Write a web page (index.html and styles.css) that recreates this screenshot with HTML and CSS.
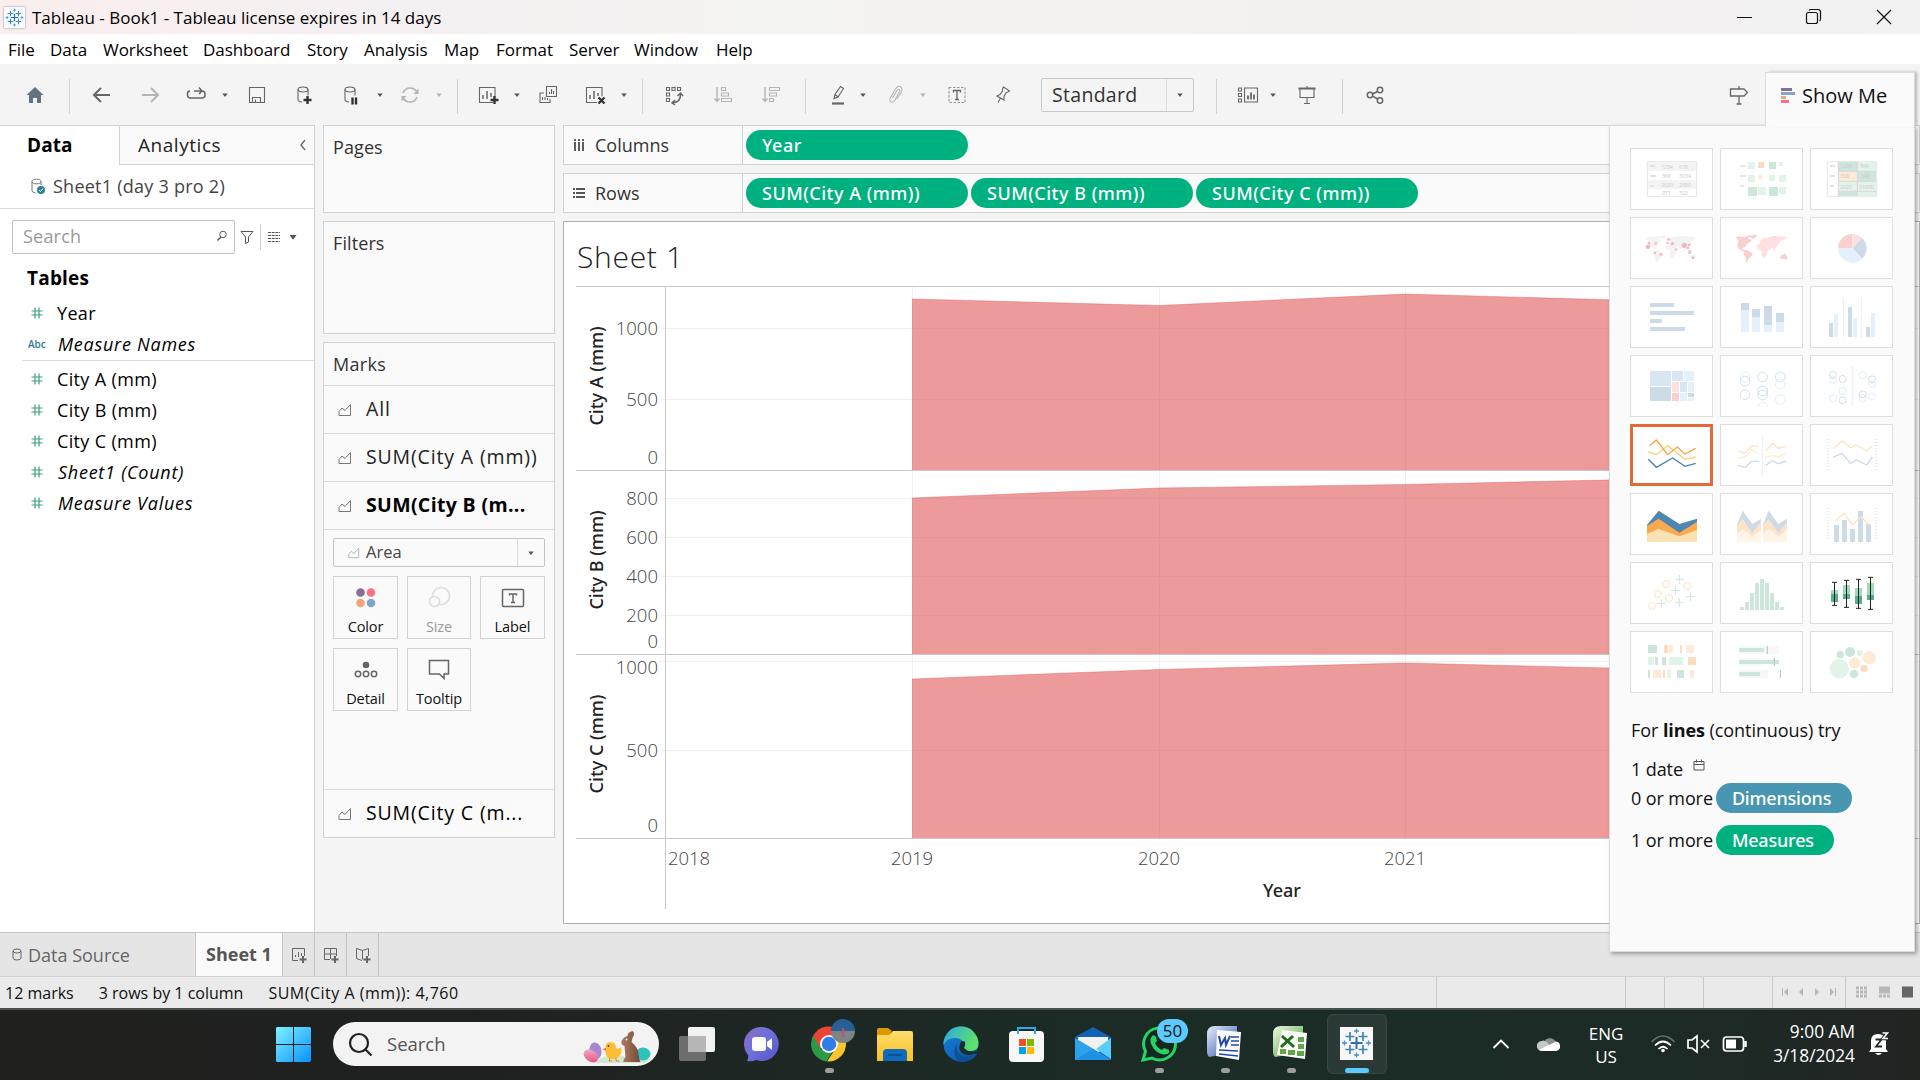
FILE: index.html
```html
<!DOCTYPE html>
<html lang="en">
<head>
<meta charset="utf-8">
<title>Tableau - Book1</title>
<link rel="stylesheet" href="styles.css">
</head>
<body>
<svg width="0" height="0" class="defs">
  <defs>
    <symbol id="hash" viewBox="0 0 12 12"><path d="M4 .5v11M8 .5v11M.5 4h11M.5 8h11" stroke="#3f9f7f" stroke-width="1.2" fill="none"/></symbol>
    <symbol id="area" viewBox="0 0 14 14"><path d="M1 12.5V8.500l3-3.500 3 2.500 5.500-6v11z" stroke="currentColor" fill="none"/></symbol>
    <symbol id="caret" viewBox="0 0 12 12"><path d="M3.300 4.500h5.400L6 8z" fill="currentColor"/></symbol>
    <symbol id="tableau" viewBox="0 0 34 34"><g stroke-width="1.700"><path d="M17 11v12M11 17h12" stroke="#2f6ea5" stroke-width="2"/><path d="M10.500 6v9M6 10.500h9M23.500 6v9M19 10.500h9M10.500 19v9M6 23.500h9M23.500 19v9M19 23.500h9" stroke="#3c87b8"/><path d="M17 2.500v5M14.500 5h5M17 26.500v5M14.500 29h5M5 14.500v5M2.500 17h5M29 14.500v5M26.500 17h5" stroke="#4a90c0" stroke-width="1.300"/></g></symbol>
  </defs>
</svg>

<header class="titlebar">
  <svg class="app-icon" viewBox="0 0 34 34"><use href="#tableau"/></svg>
  <span class="title">Tableau - Book1 - Tableau license expires in 14 days</span>
  <svg class="window-controls" viewBox="0 0 160 34" fill="none" stroke="#111" stroke-width="1.200">
    <path d="M1 17.500h15M141 10l14 14M155 10l-14 14"/><rect x="70.500" y="12.500" width="11" height="11" rx="2"/><path d="M73 10.500q.5-1 2-1h7q2.500 0 2.500 2.500v7q0 1.500-1 2"/>
  </svg>
</header>

<nav class="menu">
  <span>File</span><span>Data</span><span>Worksheet</span><span>Dashboard</span><span>Story</span><span>Analysis</span><span>Map</span><span>Format</span><span>Server</span><span>Window</span><span>Help</span>
</nav>

<div class="toolbar">
  <svg class="ic" viewBox="0 0 24 24"><path d="M12 4l8.500 8h-2.500v8h-4v-5h-4v5H6v-8H3.500z" fill="#66717f"/></svg>
  <i class="sep m22"></i>
  <svg class="ic m20" viewBox="0 0 24 24"><path d="M20 12H5M11 5l-7 7 7 7" stroke-width="2"/></svg>
  <svg class="ic m24 off" viewBox="0 0 24 24"><path d="M4 12h15M13 5l7 7-7 7" stroke-width="2"/></svg>
  <svg class="ic m22" viewBox="0 0 24 24"><path d="M6 8Q3.500 8 3.500 10.500v1.500q0 3 3 3H18q3 0 3-3v-1q0-3-3-3H10M15 4.500 18 8l-3 3" stroke-width="1.500"/></svg>
  <svg class="caret m11"><use href="#caret"/></svg>
  <svg class="ic m14" viewBox="0 0 24 24"><path d="M4.500 4.500h15v15h-15zM7.500 19.500v-5h8v5M10.500 19v-2.500"/></svg>
  <svg class="ic m23" viewBox="0 0 24 24"><ellipse cx="11" cy="6.500" rx="5" ry="2.500"/><path d="M6 6.500v10q0 2 4 2.500M16 6.500v6"/><path d="M15.500 13v8M11.500 17h8" class="bold"/></svg>
  <svg class="ic m23" viewBox="0 0 24 24"><ellipse cx="11" cy="6.500" rx="5" ry="2.500"/><path d="M6 6.500v10q0 2 4 2.500M16 6.500v6"/><path d="M13.500 14.500v7M17 14.500v7" class="bold"/></svg>
  <svg class="caret m11"><use href="#caret"/></svg>
  <svg class="ic m12 off" viewBox="0 0 24 24"><path d="M5 10Q7 5 12 5q4.500 0 7 4M19 14q-2 5-7 5-4.500 0-7-4" stroke-width="1.600"/><path d="M20.500 5.500v5.500h-5zM3.500 18.500V13h5z" fill="#b5b5b5" stroke="none"/></svg>
  <svg class="caret m11 off"><use href="#caret"/></svg>
  <i class="sep m12"></i>
  <svg class="ic m18" viewBox="0 0 24 24"><path d="M17 19.500H3.500v-15h15.500v9"/><path d="M7 16v-4M11 16V8M15 14v-4" stroke-width="1.500"/><path d="M18.500 13v8M14.500 17h8" class="bold"/></svg>
  <svg class="caret m11"><use href="#caret"/></svg>
  <svg class="ic m13" viewBox="0 0 24 24"><path d="M10.500 3.500h10v10h-10zM8 10H4v9.500h10V16M13.500 11V9M15.500 11V6M17.500 11V8M6.500 17v-3M9 17v-3M11.500 17v-2"/></svg>
  <svg class="ic m23" viewBox="0 0 24 24"><path d="M14 19.500H3.500v-15h15.500v9"/><path d="M7 16v-4M11 16V8M15 13v-3" stroke-width="1.500"/><path d="M15.500 14.500l6 6M21.500 14.500l-6 6" class="bold"/></svg>
  <svg class="caret m11"><use href="#caret"/></svg>
  <i class="sep m12"></i>
  <svg class="ic m19" viewBox="0 0 24 24"><path d="M4.500 4.500h3v3h-3zM10 4.500h3v3h-3zM15.500 4.500h3v3h-3zM4.500 10h3v3h-3zM4.500 15.500h3v3h-3z"/><path d="M18.500 11q.5 8-8 9M15.500 13l3-3 2.500 3M13 17l-3 3 3 2" stroke-width="1.500"/></svg>
  <svg class="ic m25 off" viewBox="0 0 24 24"><path d="M6 4v14M3.500 15.500 6 18.500 8.500 15.500" stroke-width="1.400"/><path d="M10.500 4.500h4v3h-4zM10.500 10h7v3h-7zM10.500 15.500h10v3h-10z"/></svg>
  <svg class="ic m24 off" viewBox="0 0 24 24"><path d="M6 4v14M3.500 15.500 6 18.500 8.500 15.500" stroke-width="1.400"/><path d="M10.500 4.500h10v3h-10zM10.500 10h7v3h-7zM10.500 15.500h4v3h-4z"/></svg>
  <i class="sep m22"></i>
  <svg class="ic m20" viewBox="0 0 24 24"><path d="M8 15.500l1-4L14.500 3.500l3 2L12 14zM8 15.500l4-1.500M9 11.500l3 2.500"/><path d="M6 20.500h12" stroke-width="2.200"/></svg>
  <svg class="caret m7"><use href="#caret"/></svg>
  <svg class="ic m14 off" viewBox="0 0 24 24"><path d="M9.500 15 14 7.500q2-2.500 3 0l-5 9.500q-3 4-5 1-.5-1.500.5-3.500L12.500 6q3-4.500 6-1.500 1 1.500 0 4L14 16"/></svg>
  <svg class="caret m10 off"><use href="#caret"/></svg>
  <svg class="ic m16" viewBox="0 0 24 24"><path d="M4 4.500h16v15H4z" stroke-dasharray="2.500 1.500" stroke="#999"/><path d="M8.500 9.500v-2h7v2M12 7.500v9M10 16.500h4" stroke-width="1.300"/></svg>
  <svg class="ic m22" viewBox="0 0 24 24"><path d="M12.500 4l6 4-1.500 1-2 .5-2 4v3.500L6 13l3-1.500L11.500 8l.2-2.500zM9.500 15l-2.500 4.500"/></svg>
  <div class="fit"><span>Standard</span><b><svg class="caret"><use href="#caret"/></svg></b></div>
  <i class="sep m22"></i>
  <svg class="ic m19" viewBox="0 0 24 24"><path d="M2.500 5h3v3h-3zM2.500 10.500h3v3h-3zM2.500 16h3v3h-3zM8.500 5h13v14h-13z"/><path d="M12 16.500v-4M15 16.500v-7M18 16.500v-5" stroke-width="1.800"/></svg>
  <svg class="caret m7"><use href="#caret"/></svg>
  <svg class="ic m16" viewBox="0 0 24 24"><path d="M5 6v8.500h14V6M12 14.500v6M9 20.500h6M12 3v2"/><path d="M3.500 5.500h17" stroke-width="2"/></svg>
  <i class="sep m23"></i>
  <svg class="ic m20" viewBox="0 0 24 24"><g stroke-width="1.500"><circle cx="7" cy="12" r="2.700"/><circle cx="17" cy="7" r="2.700"/><circle cx="17" cy="17.500" r="2.700"/><path d="M9.500 11l5-2.500M9.500 13.200l5 2.800"/></g></svg>
  <svg class="ic signpost" viewBox="0 0 24 24"><path d="M3.500 6h13.500l3.500 3.500L17 13H3.500zM12 3v3M12 13v8M9.500 21h5" stroke-width="1.300"/></svg>
</div>

<main class="work">
  <aside class="data-pane">
    <div class="tabs"><b>Data</b><span>Analytics<svg viewBox="0 0 8 12"><path d="M6 1 2 6l4 5" fill="none" stroke="#666" stroke-width="1.300"/></svg></span></div>
    <div class="source"><svg viewBox="0 0 16 17"><path d="M2 3.500v9q0 2 3.500 2.500M11 3.500V7" fill="none" stroke="#777"/><ellipse cx="6.500" cy="3.500" rx="4.500" ry="2.300" fill="none" stroke="#777"/><circle cx="11" cy="12" r="4" fill="#2e7ea0"/><path d="M9 12l1.500 1.500L13 10.500" stroke="#fff" fill="none"/></svg>Sheet1 (day 3 pro 2)</div>
    <div class="find">
      <div class="search">Search<svg viewBox="0 0 12 12" width="12" height="12"><path d="M5 7 1.500 10.500" stroke="#555" stroke-width="1.500"/><circle cx="7" cy="4.500" r="3.300" fill="none" stroke="#555"/></svg></div>
      <svg class="funnel" viewBox="0 0 14 14"><path d="M1 1.500h12L8.500 7v5l-3 1.500V7z" fill="none" stroke="#555"/></svg>
      <i></i>
      <svg class="rowsicon" viewBox="0 0 12 12"><path d="M0 1.500h12M0 4.500h12M0 7.500h12M0 10.500h12" stroke="#555" stroke-dasharray="3 .7"/></svg>
      <svg class="caret big"><use href="#caret"/></svg>
    </div>
    <h2>Tables</h2>
    <ul class="fields">
      <li><svg><use href="#hash"/></svg>Year</li>
      <li class="it"><em>Abc</em>Measure Names</li>
    </ul>
    <ul class="fields second">
      <li><svg><use href="#hash"/></svg>City A (mm)</li>
      <li><svg><use href="#hash"/></svg>City B (mm)</li>
      <li><svg><use href="#hash"/></svg>City C (mm)</li>
      <li class="it"><svg><use href="#hash"/></svg>Sheet1 (Count)</li>
      <li class="it"><svg><use href="#hash"/></svg>Measure Values</li>
    </ul>
  </aside>

  <section class="cards">
    <div class="card pages">Pages</div>
    <div class="card filters">Filters</div>
    <div class="marks">
      <div class="marks-head">Marks</div>
      <div class="mark"><svg><use href="#area"/></svg>All</div>
      <div class="mark"><svg><use href="#area"/></svg>SUM(City A (mm))</div>
      <div class="mark on"><svg><use href="#area"/></svg>SUM(City B (m...</div>
      <div class="encodings">
        <div class="type"><svg class="t"><use href="#area"/></svg><span>Area</span><b><svg class="caret"><use href="#caret"/></svg></b></div>
        <div class="buttons">
          <div><svg viewBox="0 0 24 24"><circle cx="6.500" cy="6.500" r="4.300" fill="#876f97"/><circle cx="17" cy="6.500" r="4.300" fill="#fb7182"/><circle cx="6.500" cy="17" r="4.300" fill="#f3a57c"/><circle cx="17" cy="17" r="4.300" fill="#80a4cc"/></svg>Color</div>
          <div class="dim"><svg viewBox="0 0 24 24" fill="none" stroke="#ddd" stroke-width="1.700"><circle cx="14" cy="10" r="8.500"/><circle cx="7.500" cy="15.500" r="5" fill="#fafafa"/></svg>Size</div>
          <div><svg viewBox="0 0 24 24" fill="none" stroke="#666" stroke-width="1.500"><rect x="1.500" y="3.500" width="21" height="17" rx="1"/><path d="M8.500 9.500V8h7v1.500M12 8v8.500M10 16.500h4"/></svg>Label</div>
          <div><svg viewBox="0 0 24 24" fill="none" stroke="#666" stroke-width="1.500"><circle cx="12" cy="7" r="3.300" fill="#666" stroke="none"/><circle cx="4" cy="16" r="2.700"/><circle cx="12" cy="16" r="2.700"/><circle cx="20" cy="16" r="2.700"/></svg>Detail</div>
          <div><svg viewBox="0 0 24 24" fill="none" stroke="#666" stroke-width="1.500"><path d="M2.500 2.500h19v13.500h-4.500v4.500L12.500 16h-10z"/></svg>Tooltip</div>
        </div>
      </div>
      <div class="mark last"><svg><use href="#area"/></svg>SUM(City C (m...</div>
    </div>
  </section>

  <section class="view">
    <div class="shelf"><div class="label"><svg viewBox="0 0 12 12"><path d="M2 0v12M6 0v12M10 0v12" stroke="#555" stroke-width="1.900" stroke-dasharray="2 1 9"/></svg>Columns</div><span class="pill">Year</span></div>
    <div class="shelf"><div class="label"><svg viewBox="0 0 12 12"><path d="M0 2h12M0 6h12M0 10h12" stroke="#555" stroke-width="1.900" stroke-dasharray="2 1 9"/></svg>Rows</div><span class="pill">SUM(City A (mm))</span><span class="pill">SUM(City B (mm))</span><span class="pill">SUM(City C (mm))</span></div>
    <div class="sheet">
      <svg class="chart" viewBox="564 222 1356 701" width="1356" height="701">
        <text x="577" y="268" class="sheet-title">Sheet 1</text>
        <g class="grid">
          <path d="M660 328.500H1920M660 399.500H1920M660 498.500H1920M660 537.500H1920M660 576.500H1920M660 615.500H1920M660 661.500H1920M660 750.500H1920M912.500 287V838M1159.500 287V838M1405.500 287V838"/>
        </g>
        <g class="areas">
          <path d="M912 299l247 6.500 246-11.500 247 7V470H912z"/>
          <path d="M912 498l247-10 246-3.500 247-5.500V654H912z"/>
          <path d="M912 679l247-9.500 246-6.500 247 6V838H912z"/>
        </g>
        <g class="tops">
          <path d="M912 299l247 6.500 246-11.500 247 7M912 498l247-10 246-3.500 247-5.500M912 679l247-9.500 246-6.500 247 6"/>
        </g>
        <path d="M576 286.500H1920M576 470.500H1920M576 654.500H1920M576 838.500H1920M665.500 286V909" class="rule"/>
        <g class="ticks" text-anchor="end">
          <text x="658" y="335">1000</text><text x="658" y="406">500</text><text x="658" y="464">0</text>
          <text x="658" y="505">800</text><text x="658" y="544">600</text><text x="658" y="583">400</text><text x="658" y="622">200</text><text x="658" y="648">0</text>
          <text x="658" y="674">1000</text><text x="658" y="757">500</text><text x="658" y="832">0</text>
        </g>
        <g class="ticks" text-anchor="middle">
          <text x="689" y="865">2018</text><text x="912" y="865">2019</text><text x="1159" y="865">2020</text><text x="1405" y="865">2021</text>
        </g>
        <g class="axis" text-anchor="middle">
          <text transform="translate(603 376) rotate(-90)">City A (mm)</text>
          <text transform="translate(603 560) rotate(-90)">City B (mm)</text>
          <text transform="translate(603 744) rotate(-90)">City C (mm)</text>
          <text x="1282" y="897">Year</text>
        </g>
      </svg>
    </div>
  </section>
</main>

<footer class="sheets">
  <div class="ds"><svg viewBox="0 0 10 13"><path d="M1 3v7q0 2 4 2t4-2V3" fill="none" stroke="#666"/><ellipse cx="5" cy="3" rx="4" ry="2" fill="none" stroke="#666"/></svg>Data Source</div>
  <div class="current">Sheet 1</div>
  <div class="new"><svg viewBox="0 0 18 18"><path d="M8 13.500H2.500v-12h12V9M5.500 10V8M8.500 10V5M11.500 9V6"/><path d="M13 9v7M9.500 12.500h7" stroke-width="2"/></svg></div>
  <div class="new"><svg viewBox="0 0 18 18"><path d="M8 12.500H2.500v-11h12V9M8.500 2v10M2.500 7h12"/><path d="M13 9v7M9.500 12.500h7" stroke-width="2"/></svg></div>
  <div class="new"><svg viewBox="0 0 18 18"><path d="M8 13.500 2.500 11.500v-10l6 2 6-2V9M8.500 3.500v9"/><path d="M13 9v7M9.500 12.500h7" stroke-width="2"/></svg></div>
</footer>

<div class="status">
  <span>12 marks</span><span>3 rows by 1 column</span><span class="sum">SUM(City A (mm)): 4,760</span>
  <div class="cells"><i class="c1"></i><i class="c2"></i><i class="c2"></i><i class="c3"></i>
    <i class="nav"><svg viewBox="0 0 72 16" fill="#b5b5b5"><path d="M9 4h1v8H9zM15 4v8l-4-4zM30 4v8l-4-4zM42 4v8l4-4zM57 4v8l4-4zM62 4h1v8h-1z"/></svg></i>
    <i class="modes"><svg viewBox="0 0 75 16"><path d="M10 4h12M10 8h12M10 12h12" stroke="#b8b8b8" stroke-width="3" stroke-dasharray="3 1"/><path d="M33 2.500h11v7H33z" fill="#b8b8b8"/><path d="M33 12h11" stroke="#b8b8b8" stroke-width="3" stroke-dasharray="3 1"/><path d="M56 2.500h11v11H56z" fill="#666"/></svg></i>
  </div>
</div>

<div class="taskbar">
  <svg class="task" viewBox="240 1010 1160 70" width="1160" height="70">
    <defs>
      <linearGradient id="win" x2="1" y2="1"><stop stop-color="#7df3ff"/><stop offset="1" stop-color="#0a8fff"/></linearGradient>
      <linearGradient id="fold" y2="1" x2="0"><stop stop-color="#ffdc6c"/><stop offset="1" stop-color="#fcc021"/></linearGradient>
      <linearGradient id="edge" x2="1" y2=".3"><stop stop-color="#2aa8e8"/><stop offset="1" stop-color="#5fe06a"/></linearGradient>
      <linearGradient id="edgeb" x2="1" y2="1"><stop stop-color="#1585dd"/><stop offset="1" stop-color="#0c4da0"/></linearGradient>
      <linearGradient id="chat" x2="1" y2="1"><stop stop-color="#8f6bbf"/><stop offset=".5" stop-color="#6b70dc"/><stop offset="1" stop-color="#5155c8"/></linearGradient>
      <linearGradient id="word" x2="1" y2="1"><stop stop-color="#e8eefa"/><stop offset="1" stop-color="#2a50a8"/></linearGradient>
      <linearGradient id="excel" x2="1" y2="1"><stop stop-color="#eefae4"/><stop offset="1" stop-color="#4f9a36"/></linearGradient>
      <linearGradient id="egg" x2="1" y2="1"><stop stop-color="#f9b6cd"/><stop offset="1" stop-color="#e0457f"/></linearGradient>
      <linearGradient id="choc" x2="1" y2="0"><stop stop-color="#ad7b60"/><stop offset="1" stop-color="#754a38"/></linearGradient>
      <clipPath id="chromeClip"><circle cx="828.500" cy="1044" r="17.500"/></clipPath>
      <clipPath id="av"><circle cx="843" cy="1031" r="12"/></clipPath>
    </defs>
    <path d="M277 1027h16v17h-17v-16zM294 1027h16l1 1v16h-17zM276 1045h17v17h-16l-1-1zM294 1045h17v16l-1 1h-16z" fill="url(#win)"/>
    <rect x="333" y="1022" width="326" height="44" rx="22" fill="#f3f3f3"/>
    <g fill="none" stroke="#222" stroke-width="2.200"><circle cx="359" cy="1043" r="9"/><path d="M365.500 1049.500l6 6"/></g>
    <text x="387" y="1051" class="tb-search">Search</text>
    <path d="M596 1063q2-7 20-7t34 3q-2 4-10 4z" fill="#cfe8cf"/>
    <ellipse cx="595.500" cy="1051" rx="6" ry="8.500" fill="#a688cf" transform="rotate(-10 595 1051)"/>
    <ellipse cx="591" cy="1056" rx="8" ry="5.500" fill="url(#egg)" transform="rotate(35 591 1056)"/>
    <path d="M606 1049q-2-6 4-7 6 0 6 6 3 2 5-1 2 8-4 11-8 3-11-3-1-3 0-6z" fill="#fdbe35"/><path d="M606 1048l-4 1 4 2z" fill="#f07a1e"/><path d="M610 1058l-1 3h3M616 1058v3h3" fill="none" stroke="#f07a1e"/><circle cx="608.500" cy="1046" r=".9" fill="#5a3210"/>
    <ellipse cx="643" cy="1054" rx="7.500" ry="6.500" fill="#2cc3bd"/>
    <path d="M621.500 1041q2-4 6-5 0-4 5-5 3 2 0 7l-1 4q7 6 7 12l1 6q2 2-1 2h-15v-2l2-3-1-11q-4-1-3-5z" fill="url(#choc)"/><circle cx="626.500" cy="1039.500" r="1" fill="#fff"/>
    <rect x="679" y="1036" width="27" height="25" rx="2" fill="#6d6d6d"/><rect x="688" y="1027" width="27" height="25" rx="2" fill="#f2f2f2"/><path d="M688 1036h18v16h-18z" fill="#b6b6b6"/>
    <path d="M762 1027a17 17 0 1 1-6 33q-4 2-9 1 2-4 1-6a17 17 0 0 1 14-28z" fill="url(#chat)"/><rect x="752" y="1037" width="14" height="14" rx="3" fill="#fff"/><path d="M767 1042l5-4v12l-5-4z" fill="#fff"/>
    <g clip-path="url(#chromeClip)"><path d="M810 1026h38v13h-20l-8 10-10-14z" fill="#e94436"/><path d="M848 1039v24h-22l10-15q2-6-3-9z" fill="#fcc52c"/><path d="M812 1034l9 15q4 5 12 2l-8 13h-16z" fill="#2a9a48"/></g>
    <circle cx="829" cy="1044" r="9" fill="#fff"/><circle cx="829" cy="1044" r="7.200" fill="#2f7de9"/>
    <g clip-path="url(#av)"><path d="M831 1019h24v12h-24z" fill="#285f95"/><path d="M831 1031h24v12h-24z" fill="#7d8485"/><path d="M843 1028v9M839 1032.500l8-1.500" stroke="#b5557f" stroke-width="1.500"/></g>
    <path d="M877 1030q0-2 2-2h9l4 3-3 5h-12z" fill="#d99a06"/><path d="M877 1035h12l4-4h18q2 0 2 2v28h-36z" fill="url(#fold)"/><path d="M883 1053q0-4 4-4h16q4 0 4 4v8h-24z" fill="#0f6cbd"/><path d="M888 1055h14" stroke="#0a4a88" stroke-width="1.500"/>
    <circle cx="961" cy="1044" r="17.500" fill="url(#edgeb)"/><path d="M943.500 1044a17.500 17.500 0 0 1 35 0q0 6-7 7h-8q-3-1 0-4 1-9-9-9-7 0-10.500 6z" fill="url(#edge)"/><path d="M957 1043q-2 10 6 13 8 2 13-3l1 1q-5 8-15 8-12-4-5-19z" fill="#0f4f98"/><path d="M960 1044q2-5 5-2 1 3-1 6 4 4 9 3.500 4 0 6-2v3l-3 1q-9 3-14-.5-4-3-2-9z" fill="#1c2c27"/>
    <rect x="1009" y="1031" width="35" height="31" rx="4" fill="#f7f7f7"/><path d="M1018 1034v-6h17v6" fill="none" stroke="#2fa8ec" stroke-width="2"/><path d="M1019 1039h7v7h-7z" fill="#f25022"/><path d="M1027 1039h7v7h-7z" fill="#7fba00"/><path d="M1019 1047h7v7h-7z" fill="#00a4ef"/><path d="M1027 1047h7v7h-7z" fill="#ffb900"/>
    <path d="M1075 1037l18-10 18 10v23h-36z" fill="#0f62b5"/><path d="M1078 1037h30v10l-15 8-15-8z" fill="#f2f2f2"/><path d="M1075 1038l22 13 14 9h-36z" fill="#2aa2ec"/><path d="M1111 1038v21l-15-10z" fill="#57cdf8"/><path d="M1075 1060l18-11 18 11z" fill="#1f90e4"/>
    <path d="M1143 1060l2.500-8.500A16 16 0 1 1 1152 1058z" fill="#13281f" stroke="#25d366" stroke-width="3"/><path d="M1152 1036q2-2 4 1l1 4-2 2q2 5 7 7l2-2 5 2q1 3-2 4-7 2-13-5-6-8-2-13z" fill="#25d366"/>
    <rect x="1157" y="1019" width="31" height="24" rx="12" fill="#5bcbff"/><text x="1172.500" y="1037" text-anchor="middle" class="badge">50</text>
    <path d="M1207 1034q0-8 8-8h22v26l-28 5q-2-2-2-5z" fill="url(#word)"/><path d="M1217 1030l24 2-2 28-23-4z" fill="#fdfdff"/><path d="M1219 1036l2 9 4-7 1 7 4-9" stroke="#2348a4" stroke-width="2" fill="none"/><path d="M1231 1037h8M1231 1041h8M1231 1045h8M1219 1050l19 1M1219 1054l19 2" stroke="#2348a4" stroke-width="1.700"/>
    <path d="M1273 1034q0-8 8-8h22v26l-28 5q-2-2-2-5z" fill="url(#excel)"/><path d="M1282 1030l25 3-2 26-28-4z" fill="#fbfff8"/><path d="M1282 1036l12 11M1293 1036l-12 11" stroke="#1f6b20" stroke-width="3"/><path d="M1298 1037h6v5h-6zM1298 1044h6v5h-6zM1280 1049h6v5h-6zM1288 1050h7v5h-7zM1297 1051h7v5h-7z" fill="#62a648"/>
    <rect x="1327.500" y="1014.500" width="59" height="59" rx="5" fill="#ffffff12" stroke="#ffffff18"/><path d="M1340 1027h33v33h-33z" fill="#f7f7f7"/><use href="#tableau" x="1339.500" y="1026" width="34" height="34"/>
    <g fill="#9a9f9c"><rect x="825" y="1068" width="9" height="5" rx="2.500"/><rect x="1155" y="1068" width="9" height="5" rx="2.500"/><rect x="1221" y="1068" width="9" height="5" rx="2.500"/><rect x="1287" y="1068" width="9" height="5" rx="2.500"/></g>
    <rect x="1345" y="1068" width="24" height="5" rx="2.500" fill="#5bcbff"/>
  </svg>
  <svg class="chev" viewBox="0 0 18 12"><path d="M1.500 10 9 2.500l7.500 7.500" fill="none" stroke="#fff" stroke-width="1.800"/></svg>
  <svg class="cloud" viewBox="0 0 24 16"><path d="M8 4a7 7 0 0 1 11 2l-9 4z" fill="#8a918e"/><path d="M5 15a5 5 0 0 1-.5-10Q8 3 12 8l4 7z" fill="#c4c8c6"/><path d="M2.500 13.500 14 8l5-2.500a4.800 4.800 0 0 1 0 9.500H5q-1.500 0-2.500-1.500z" fill="#fff"/></svg>
  <div class="lang">ENG<br>US</div>
  <svg class="tray" viewBox="1650 1030 98 28" fill="none" stroke="#fff" stroke-width="1.700">
    <path d="M1651.500 1042q11.500-12 23 0" stroke="#66706c"/><path d="M1655 1045.500q8-8 16 0M1658.500 1049q4.500-4.500 9 0"/><circle cx="1663" cy="1050.500" r="1.800" fill="#fff" stroke="none"/>
    <path d="M1688 1040h4l5-4v16l-5-4h-4zM1701 1040l8 8M1709 1040l-8 8"/>
    <rect x="1723.500" y="1037" width="20" height="14" rx="3"/><path d="M1726 1039.500h10v9h-10z" fill="#fff" stroke="none"/><path d="M1745.500 1041v6" stroke-width="2.500"/>
  </svg>
  <div class="clock">9:00 AM<br>3/18/2024</div>
  <svg class="bell" viewBox="0 0 22 26"><path d="M3 18V10q0-7 7-7t8 7v8l2 3H1zM7 22h7q-3.500 4-7 0z" fill="#fff"/><path d="M7.500 8.500h6L8 15.500h6" fill="none" stroke="#1e2a25" stroke-width="1.800"/><path d="M14.500 2h5l-4.500 5.500h5" fill="none" stroke="#1e2a25" stroke-width="3.500"/><path d="M14.500 2h5l-4.500 5.500h5" fill="none" stroke="#fff" stroke-width="1.600"/></svg>
</div>

<div class="showme">
  <div class="showme-tab"><svg viewBox="0 0 14 16"><path d="M0 0h11v3H0z" fill="#876f97"/><path d="M0 4h14v3H0z" fill="#80a4cc"/><path d="M0 8h5v3H0z" fill="#f3a57c"/><path d="M0 12h8v3H0z" fill="#fb7182"/></svg>Show Me</div>
  <div class="thumbs">
    <svg viewBox="90 54 249 186"><path d="M142 95h148v104H142z" fill="#fff" stroke="#e6e6e6" stroke-width="3"/><path d="M144 97h144v26H144zM144 150h144v26H144z" fill="#f4f4f4"/><path d="M150 108h15M150 138h18M150 168h12" stroke="#e2e2e2" stroke-width="6"/><g class="num"><text x="183" y="116">1234</text><text x="237" y="116">678</text><text x="185" y="143">368</text><text x="237" y="143">3034</text><text x="183" y="170">2620</text><text x="237" y="170">2559</text><text x="185" y="194">971</text><text x="237" y="194">322</text></g></svg>
    <svg viewBox="360 54 249 186"><path d="M420 108h15M420 138h18M420 168h12" stroke="#e6e6e6" stroke-width="6"/><path d="M444 96h21v21h-21zM537 96h12v12h-12zM444 135h21v21h-21zM507 135h18v18h-18zM537 135h21v21h-21zM474 171h24v24h-24zM537 171h21v21h-21z" fill="#e2f3e9"/><path d="M507 96h21v21h-21zM444 171h27v27h-27zM507 171h27v27h-27z" fill="#cde6dc"/><path d="M474 96h18v18h-18z" fill="#fbdcc0"/><path d="M474 135h12v12h-12z" fill="#ffead6"/></svg>
    <svg viewBox="630 54 249 186"><path d="M682 95h148v104H682z" fill="#fff" stroke="#e6e6e6" stroke-width="3"/><path d="M716 96h55v27h-55zM774 126h54v27h-54zM716 186h55v12h-55z" fill="#cde6dc"/><path d="M774 96h54v27h-54zM716 156h112v27H716zM774 186h54v12h-54z" fill="#e2f3e9"/><path d="M716 126h55v27h-55z" fill="#ffead6"/><path d="M715 96v103M772 96v103M715 124h113M715 154h113M715 184h113" stroke="#d4d4d4" stroke-width="3"/><path d="M690 108h15M690 138h15M690 168h12" stroke="#e2e2e2" stroke-width="6"/><g class="num"><text x="720" y="114">1234</text><text x="780" y="114">546</text><text x="720" y="145">368</text><text x="783" y="145">340</text><text x="720" y="176">2620</text><text x="777" y="176">51890</text></g></svg>

    <svg viewBox="90 261 249 186"><g fill="#f3f3f3"><path d="M137 323l30-3 14-4-4 10 8 4-10 12-8 10 3 8-10-6-12-6-5-14zM180 318l22-3-8 9-10 5zM162 360l14 2 13 10-6 12-8 6-3 8-5-2-2-20-5-8zM200 343l20 2 14 12-8 16-8 12-6-2-4-22-12-6zM204 325l16-4 24-4 40 4 6 4-14 8-2 12-10 8-8 8-8-8-8 6-6-12-12 6-14-10-6 4zM273 378l12-6 6 12-10 4-10-4z"/></g><g fill="#f7c4c8"><circle cx="167" cy="340" r="5"/><circle cx="206" cy="328" r="5"/><circle cx="202" cy="339" r="4"/><circle cx="228" cy="358" r="4"/><circle cx="183" cy="373" r="5"/><circle cx="269" cy="366" r="6"/></g><g fill="#ecb8c0"><circle cx="144" cy="351" r="6.500"/><circle cx="147" cy="340" r="4"/><circle cx="217" cy="341" r="5"/><circle cx="165" cy="369" r="4"/><circle cx="253" cy="346" r="8"/><circle cx="267" cy="345" r="4"/><circle cx="264" cy="354" r="4"/><circle cx="279" cy="383" r="4"/></g></svg>
    <svg viewBox="360 261 249 186"><g fill="#f8d0cf"><path d="M407 322l12-3 10 2 14-3 7-3-1 6-5 3 2 4 7-1 2 6-9 6-6 4-4 8-8 2-2 4 6 4 4 4-8-1-8-5-7-8-1-8 3-9-3-6zM444 318l14-3 15 1-6 6-8 5-5-4zM432 361l8-2 10 6 8 5-3 8-8 7-4 7-1 7-4-3-1-14-6-8zM540 382l5-6 7-3 5-2 4 9 2 5-5 4-6-3-10 1z"/></g><g fill="#ffe0e0"><path d="M470 347l8-4 12 1 8 2 4 8 6 2-5 8-2 10-7 9-5 1-4-10 1-9-6-7h-6l-4-6zM480 338l1-6 6-5 5-5 8 2 14-5 12-1 14 2 18 1v5l-8 3 1 6-5-5-6 4-2 7-7 6-3 7-4 1 2 7-4 2-4-9-4-1-5 8-4-9-8-1 2 4-5 2-4-6-7-2-6 1z"/></g></svg>
    <svg viewBox="630 261 249 186"><path d="M757 355h-43a43 43 0 0 1 43-43z" fill="#f8d0cf"/><path d="M757 355v-43a43 43 0 0 1 30 13z" fill="#ffe0e0"/><path d="M757 355l30-30a43 43 0 0 1 0 61z" fill="#cddae8"/><path d="M757 355l30 31a43.500 43.500 0 0 1-73-31z" fill="#e4f1fc"/></svg>

    <svg viewBox="90 468 249 186"><path d="M150 519h72v12h-72zM150 543h132v12h-132zM150 567h36v12h-36zM150 591h105v12h-105z" fill="#cddae8"/></svg>
    <svg viewBox="360 468 249 186"><path d="M423 519h24v87h-24zM456 537h24v69h-24zM492 528h24v78h-24zM528 549h24v57h-24z" fill="#cddae8"/><path d="M423 540h24v66h-24zM456 561h24v45h-24zM492 585h24v21h-24zM528 576h24v30h-24z" fill="#e4f1fc"/></svg>
    <svg viewBox="630 468 249 186"><path d="M687 579h12v42h-12zM744 531h12v90h-12zM798 591h12v30h-12z" fill="#cddae8"/><path d="M702 552h12v69h-12zM759 564h12v57h-12zM813 549h12v72h-12z" fill="#e4f1fc"/><path d="M730 501v120M784 501v120" stroke="#eee" stroke-width="3"/></svg>

    <svg viewBox="90 675 249 186"><path d="M150 723h63v45h-63zM216 723h33v30h-33zM240 756h21v30h-21z" fill="#d8e6f1"/><path d="M150 771h63v42h-63zM264 789h18v12h-18z" fill="#cddae8"/><path d="M252 723h30v30h-30zM264 756h18v30h-18zM240 789h21v24h-21zM264 804h18v9h-18z" fill="#e4f1fc"/><path d="M216 756h21v30h-21z" fill="#ffe0e0"/><path d="M216 789h21v24h-21z" fill="#f8d0cf"/></svg>
    <svg viewBox="360 675 249 186" fill="none" stroke-width="3"><g stroke="#e0effa"><circle cx="435" cy="741" r="14.500"/><circle cx="541" cy="762" r="14.500"/><circle cx="541" cy="809" r="14.500"/><path d="M474 831a14.500 14.500 0 0 1 29 0"/></g><g stroke="#d0dfea"><circle cx="435" cy="753" r="14.500"/><circle cx="435" cy="794" r="14.500"/><circle cx="488" cy="741" r="14.500"/><circle cx="488" cy="783" r="14.500"/><circle cx="488" cy="795" r="14.500"/><circle cx="541" cy="741" r="14.500"/></g></svg>
    <svg viewBox="630 675 249 186" fill="none" stroke-width="3"><path d="M757 708v120" stroke="#eee"/><g stroke="#e0effa"><circle cx="699" cy="750" r="10.500"/><circle cx="728" cy="783" r="10.500"/><circle cx="699" cy="805" r="10.500"/><circle cx="788" cy="736" r="10.500"/><circle cx="816" cy="762" r="10.500"/><circle cx="788" cy="805" r="10.500"/><circle cx="816" cy="799" r="10.500"/></g><g stroke="#d0dfea"><circle cx="699" cy="735" r="10.500"/><circle cx="728" cy="747" r="10.500"/><circle cx="728" cy="811" r="10.500"/><circle cx="816" cy="748" r="10.500"/><circle cx="788" cy="793" r="10.500"/></g></svg>

    <svg class="picked" viewBox="90 42 249 186" fill="none" stroke-width="4"><path d="M145 125l24 9 34-27 52 41 32-7" stroke="#f8d27a"/><path d="M149 107l20-17 34 44 29-23 23 21 32-17" stroke="#faa344"/><path d="M145 148l24 24 49-28 37 25 32-9" stroke="#4a82b0"/></svg>
    <svg viewBox="360 42 249 186" fill="none" stroke-width="4"><path d="M487 75v120" stroke="#eee" stroke-width="3"/><path d="M414 144l21-3 20-22 20 13M496 143l20-7 20 5 22-12" stroke="#fdeed0"/><path d="M414 124l22 5 19-22 22 2M497 123l20-23 18 15 23-6" stroke="#fde3c8"/><path d="M414 166l22 6 19-18h22M497 166l19-13 20 8 22-8" stroke="#cddae8"/></svg>
    <svg viewBox="630 42 249 186" fill="none" stroke-width="4"><path d="M700 116l26-24 26 22 17-10 31 19 17-15" stroke="#fde3c8"/><path d="M699 142l27-12 26 30 17-10 31 15 17-24" stroke="#cddae8"/><path d="M685 87v93M829 87v93" stroke="#eee" stroke-width="9" stroke-dasharray="3 6"/></svg>

    <svg viewBox="90 249 249 186"><path d="M141 345l35-43 62 40 53-16v70H141z" fill="#4f86b0"/><path d="M141 348l35-22 62 42 53-33v61H141z" fill="#faa94c"/><path d="M141 372l35-15 62 22 53-19v36H141z" fill="#fae2b4"/></svg>
    <svg viewBox="360 249 249 186"><path d="M411 345l17-43 29 40 26-16v70h-72zM489 345l17-43 29 40 26-16v70h-72z" fill="#cddae8"/><path d="M411 348l17-22 29 42 26-33v61h-72zM489 348l17-22 29 42 26-33v61h-72z" fill="#fde3c8"/><path d="M411 372l17-15 29 22 26-19v36h-72zM489 372l17-15 29 22 26-19v36h-72z" fill="#fef5e8"/></svg>
    <svg viewBox="630 249 249 186"><path d="M702 345h15v51h-15zM726 330h15v66h-15zM750 357h15v39h-15zM774 303h15v93h-15zM798 342h15v54h-15z" fill="#cddae8"/><path d="M706 334l26-24 25 35 26-25 27 27" fill="none" stroke="#fde3c8" stroke-width="4"/><path d="M685 294v93M829 294v93" stroke="#eee" stroke-width="9" stroke-dasharray="3 6"/></svg>

    <svg viewBox="90 456 249 186" fill="none" stroke-width="3"><g stroke="#fde3c8"><circle cx="198" cy="522" r="10.500"/><circle cx="261" cy="528" r="10.500"/><circle cx="174" cy="552" r="10.500"/><circle cx="207" cy="564" r="10.500"/><circle cx="156" cy="588" r="10.500"/></g><path d="M225 508h27M238 495v27M213 542h27M226 528v27M258 560h27M271 546v27M225 577h27M238 564v27M171 580h27M184 567v27" stroke="#cde6dc"/></svg>
    <svg viewBox="360 456 249 186"><path d="M420 591h12v9h-12zM435 576h12v24h-12zM450 549h12v51h-12zM465 519h12v81h-12zM480 507h12v93h-12zM495 519h12v81h-12zM510 549h12v51h-12zM525 576h12v24h-12zM540 591h12v9h-12z" fill="#cde6dc"/></svg>
    <svg viewBox="630 456 249 186"><path d="M693 540h21v12h-21zM729 525h21v27h-21zM765 534h21v24h-21zM801 519h21v36h-21z" fill="#a0dcb8"/><path d="M693 552h21v24h-21zM729 552h21v15h-21zM765 558h21v24h-21zM801 555h21v15h-21z" fill="#58ae8a"/><path d="M703.500 517v69M696 517h15M696 586h15M739.500 511v81M732 511h15M732 592h15M775.500 508v87M768 508h15M768 595h15M811.500 502v96M804 502h15M804 598h15" stroke="#222" stroke-width="3"/></svg>

    <svg viewBox="90 663 249 186"><path d="M144 705h27v24h-27zM165 741h9v24h-9zM186 741h12v24h-12zM144 780h6v24h-6zM231 780h21v24h-21z" fill="#cde6dc"/><path d="M144 741h18v24h-18zM207 741h42v24h-42zM201 780h12v24h-12z" fill="#e2f3e9"/><path d="M192 705h12v24h-12zM240 705h6v24h-6zM264 741h24v24h-24zM189 780h6v24h-6z" fill="#fbdcc0"/><path d="M207 705h12v24h-12zM258 705h24v24h-24zM159 780h24v24h-24zM270 780h12v24h-12z" fill="#ffead6"/></svg>
    <svg viewBox="360 663 249 186"><path d="M417 708h120v24h-120zM417 744h66v24h-66zM417 780h87v24h-87z" fill="#f7f7f7"/><path d="M417 714h75v12h-75zM417 750h120v12h-120zM417 786h63v12h-63z" fill="#cde6dc"/><path d="M502 708v24M523 744v24M541 780v24" stroke="#bbb" stroke-width="3"/></svg>
    <svg viewBox="630 663 249 186"><circle cx="718" cy="776" r="29" fill="#e2f3e9"/><circle cx="779" cy="729" r="9" fill="#e2f3e9"/><g fill="#cde6dc"><circle cx="721" cy="734" r="11"/><circle cx="750" cy="726" r="15"/><circle cx="762" cy="792" r="13"/></g><circle cx="808" cy="743" r="20" fill="#ffead6"/><circle cx="764" cy="759" r="17" fill="#ffead6"/><circle cx="792" cy="775" r="11" fill="#fbdcc0"/></svg>
  </div>
  <div class="hint">For <b>lines</b> (continuous) try</div>
  <div class="need date">1 date <svg viewBox="0 0 12 12"><path d="M1 2.500h10v8.500H1zM1 5.500h10M3.500.5v3M8.500.5v3" fill="none" stroke="#555"/></svg></div>
  <div class="need">0 or more <span class="pill dims">Dimensions</span></div>
  <div class="need last">1 or more <span class="pill meas">Measures</span></div>
</div>
</body>
</html>
```
FILE: styles.css
```css
* { box-sizing: border-box; }
body {
  margin: 0; width: 1920px; height: 1080px; overflow: hidden; position: relative;
  display: flex; flex-direction: column;
  font: 18px/24px "Open Sans", "Noto Sans", sans-serif; color: #333; background: #f4f4f4;
}
svg { display: block; flex: none; }
svg text { font-family: "Open Sans", "Noto Sans", sans-serif; }
.defs { position: absolute; }
i, em { font-style: normal; }
ul, h2 { margin: 0; padding: 0; list-style: none; }

.titlebar { height: 34px; flex: none; display: flex; align-items: center; padding-left: 4px; color: #000;
  background: linear-gradient(90deg, #faeeee, #f5f0f2 20%, #f3f3f1 40%, #f5f0f0 70%, #f2f2f2); font-size: 17px; }
.app-icon { width: 21px; height: 21px; background: #f6fafd; box-shadow: 0 0 2px #888; }
.title { margin-left: 7px; margin-top: 1px; }
.window-controls { width: 160px; height: 34px; margin-left: auto; margin-right: 24px; }

.menu { height: 30px; flex: none; background: #fff; color: #000; display: grid; align-items: center; padding: 2px 0 0 8px; font-size: 17px; letter-spacing: -.05px;
  grid-template-columns: 42px 53px 100px 104px 57px 80px 52px 73px 65px 82px auto; }

.toolbar { height: 61px; flex: none; display: flex; align-items: center; padding-left: 23px; background: #f4f4f4; }
.ic { width: 24px; height: 24px; fill: none; stroke: #666; stroke-width: 1.1; }
.ic path[fill] { stroke: none; }
.ic .bold { stroke: #333; stroke-width: 2.4; }
.ic.off { stroke: #b5b5b5; }
.caret { width: 12px; height: 12px; color: #555; }
.caret.off { color: #b5b5b5; }
.sep { width: 1px; height: 35px; background: #d2d2d2; margin-top: 3px; }
.m7 { margin-left: 7px; } .m10 { margin-left: 10px; } .m11 { margin-left: 11px; } .m12 { margin-left: 12px; }
.m13 { margin-left: 13px; } .m14 { margin-left: 14px; } .m16 { margin-left: 16px; } .m18 { margin-left: 18px; }
.m19 { margin-left: 19px; } .m20 { margin-left: 20px; } .m22 { margin-left: 22px; } .m23 { margin-left: 23px; }
.m24 { margin-left: 24px; } .m25 { margin-left: 25px; }
.fit { width: 153px; height: 34px; margin-left: 26px; border: 1px solid #c8c8c8; border-radius: 2px; display: flex; justify-content: space-between; font-size: 19.5px; line-height: 32px; padding-left: 10px; letter-spacing: .3px; }
.fit b { width: 27px; border-left: 1px solid #ddd; display: grid; place-items: center; }
.signpost { margin-left: auto; margin-right: 169px; }

.work { height: 807px; flex: none; display: flex; }
.data-pane { width: 315px; flex: none; background: #fff; border-right: 1px solid #d2d2d2; border-top: 1px solid #d2d2d2; color: #000; }
.tabs { display: flex; height: 39px; }
.tabs b { width: 119px; padding: 7px 0 0 27px; font-size: 19px; letter-spacing: .1px; }
.tabs span { flex: 1; display: flex; justify-content: space-between; padding: 7px 7px 0 18px; border-left: 1px solid #d2d2d2; border-bottom: 1px solid #d2d2d2; background: #fafafa; color: #222; font-size: 19px; letter-spacing: .55px; }
.tabs svg { width: 8px; height: 12px; margin-top: 6px; }
.source { height: 44px; display: flex; align-items: center; padding: 0 0 1px 30px; gap: 7px; border-bottom: 1px solid #ddd; color: #444; letter-spacing: .25px; }
.source svg { width: 16px; height: 17px; }
.find { display: flex; align-items: center; margin: 11px 0 0 12px; height: 34px; }
.search { width: 223px; height: 34px; border: 1px solid #c0c0c0; border-radius: 2px; color: #999; display: flex; align-items: center; justify-content: space-between; padding: 0 6px 2px 10px; letter-spacing: .2px; }
.funnel { width: 14px; height: 14px; margin-left: 5px; }
.find i { width: 1px; height: 26px; background: #d2d2d2; margin-left: 6px; }
.rowsicon { width: 12px; height: 12px; margin-left: 7px; }
.caret.big { width: 16px; height: 16px; margin-left: 5px; }
h2 { font-size: 19px; line-height: 24px; margin: 12px 0 7px 27px; letter-spacing: .2px; }
.fields li { height: 31px; display: flex; align-items: center; padding-left: 31px; letter-spacing: .35px; }
.fields svg { width: 12px; height: 12px; margin-right: 14px; }
.fields em { width: 30px; margin-left: -3px; color: #31799a; font-size: 10px; font-weight: 600; font-style: normal; letter-spacing: 0; }
.fields .it { font-style: italic; letter-spacing: .75px; }
.fields .it svg { margin-right: 15px; }
.fields.second { margin: 1px 0 0 22px; border-top: 1px solid #ddd; padding-top: 2px; }
.fields.second li { padding-left: 9px; }

.cards { width: 232px; flex: none; margin: 0 8px; display: flex; flex-direction: column; gap: 8px; }
.card { border: 1px solid #d2d2d2; background: #fafafa; padding: 9px; height: 88px; letter-spacing: .1px; }
.filters { height: 113px; }
.marks { border: 1px solid #d2d2d2; background: #fafafa; height: 496px; }
.marks-head { height: 42px; padding: 9px 9px; letter-spacing: .3px; }
.mark { height: 48px; border-top: 1px solid #ddd; display: flex; align-items: center; padding: 0 0 2px 14px; gap: 14px; font-size: 19.5px; letter-spacing: .85px; color: #222; white-space: nowrap; }
.mark svg { width: 14px; height: 14px; color: #777; margin-top: 2px; }
.mark.on { font-weight: 700; color: #000; letter-spacing: .35px; }
.mark.last { color: #000; }
.encodings { height: 260px; border-top: 1px solid #ddd; padding: 8px 9px 0; }
.type { height: 29px; border: 1px solid #c4c4c4; border-radius: 2px; display: flex; align-items: center; padding: 0 0 0 14px; font-size: 16.500px; color: #444; }
.type span { margin-top: -2px; }
.type .t { width: 12px; height: 12px; color: #aaa; margin-right: 6px; }
.type b { margin-left: auto; width: 27px; height: 100%; border-left: 1px solid #ddd; display: grid; place-items: center; }
.buttons { display: grid; grid-template-columns: 65px 64px 65px; column-gap: 9px; row-gap: 9px; margin-top: 9px; }
.buttons div { height: 63px; border: 1px solid #d2d2d2; display: flex; flex-direction: column; align-items: center; font-size: 14.500px; line-height: 20px; color: #111; letter-spacing: -.1px; }
.buttons svg { width: 24px; height: 24px; margin: 9px 0 7px; }
.buttons .dim { color: #999; }

.view { flex: 1; min-width: 0; display: flex; flex-direction: column; }
.shelf { height: 40px; margin-bottom: 8px; border: 1px solid #d2d2d2; background: #fafafa; display: flex; align-items: center; gap: 3px; }
.label { width: 179px; height: 100%; border-right: 1px solid #d2d2d2; display: flex; align-items: center; gap: 10px; padding-left: 9px; }
.label svg { width: 12px; height: 12px; }
.pill { display: inline-block; width: 222px; height: 30px; border-radius: 15px; background: #00b180; color: #fff; line-height: 30px; padding-left: 16px; letter-spacing: .5px; font-family: "Noto Sans", sans-serif; font-weight: 500; white-space: nowrap; }
.sheet { height: 703px; border: 1px solid #b0b0b0; background: #fff; overflow: hidden; }
.sheet-title { font-size: 30px; font-weight: 300; letter-spacing: .7px; fill: #222; }
.grid { stroke: #f0f0f0; fill: none; }
.areas { fill: #e15759; fill-opacity: .6; }
.tops { fill: none; stroke: #e15759; stroke-opacity: .4; }
.rule { stroke: #c8c8c8; fill: none; }
.ticks { font-size: 18.500px; font-weight: 300; fill: #444; }
.axis text { font-family: "Noto Sans", sans-serif; font-size: 18px; font-weight: 500; fill: #222; }

.sheets { height: 45px; flex: none; display: flex; background: #e5e5e5; border-top: 1px solid #c6c6c6; border-bottom: 1px solid #d0d0d0; color: #666; }
.ds { width: 195px; display: flex; align-items: center; gap: 6px; padding-left: 12px; }
.ds svg { width: 10px; height: 13px; }
.current { width: 88px; background: #fafafa; border: solid #c6c6c6; border-width: 0 1px; font-weight: 700; color: #555; display: grid; place-items: center; padding-bottom: 2px; }
.new { width: 32px; border-right: 1px solid #c6c6c6; display: grid; place-items: center; }
.new svg { width: 18px; height: 18px; fill: none; stroke: #666; margin-top: 2px; }
.status { height: 31px; flex: none; display: flex; background: #eaeaea; color: #111; font-size: 16px; line-height: 32px; padding-left: 5px; }
.status span { margin-right: 25px; }
.status .sum { letter-spacing: .5px; }
.cells { margin-left: auto; display: flex; }
.cells i { border-left: 1px solid #cacaca; }
.c1 { width: 189px; } .c2 { width: 39px; } .c3 { width: 69px; }
.nav { width: 73px; padding-top: 7px; } .modes { width: 75px; padding-top: 7px; }
.nav svg { width: 72px; height: 16px; } .modes svg { width: 75px; height: 16px; }

.taskbar { height: 72px; flex: none; border-top: 2px solid #4a504d; display: flex; padding-left: 240px; color: #fff;
  background: linear-gradient(90deg, #20211f, #1f2120 25%, #1c2a25 50%, #1b2c27 70%, #1d2a26 90%, #222422); }
.tb-search { font-size: 18.500px; fill: #555; }
.badge { font-size: 17px; fill: #111; }
.chev { width: 18px; height: 12px; margin: 28px 0 0 92px; }
.cloud { width: 24px; height: 16px; margin: 26px 0 0 27px; }
.lang { width: 60px; margin: 12px 0 0 15px; text-align: center; font-size: 17px; line-height: 23px; }
.tray { width: 98px; height: 28px; margin: 20px 0 0 14px; }
.clock { width: 107px; text-align: right; margin-top: 10px; font-size: 17.300px; line-height: 24px; }
.bell { width: 22px; height: 26px; margin: 21px 0 0 13px; }

.showme { position: absolute; left: 1609px; top: 125px; width: 306px; height: 827px; background: #fafafa; border: 1px solid #dcdcdc; box-shadow: 2px 2px 4px #0005; color: #111; padding: 22px 0 0 20px; }
.showme-tab { position: absolute; right: -1px; top: -54px; width: 150px; height: 55px; background: #fafafa; border: 1px solid #dcdcdc; border-bottom: 0; box-shadow: 3px -1px 3px -1px #0004; display: flex; align-items: center; padding: 0 0 8px 15px; gap: 7px; font-size: 20px; }
.showme-tab svg { width: 14px; height: 16px; }
.thumbs { display: grid; grid-template-columns: repeat(3, 83px); column-gap: 7px; row-gap: 7px; }
.thumbs svg { width: 83px; height: 62px; background: #fff; box-shadow: inset 0 0 0 1px #dedede; }
.thumbs .picked { box-shadow: inset 0 0 0 3px #e06c35; outline: 1px solid #e06c35; outline-offset: -1px; }
.num { font-size: 17px; fill: #ccc; letter-spacing: -1px; }
.hint { margin-top: 25px; letter-spacing: -.07px; padding-left: 1px; }
.need { display: flex; align-items: center; gap: 3px; padding-left: 1px; height: 30px; margin-top: 12px; letter-spacing: -.1px; }
.need.date { margin-top: 12px; height: 29px; gap: 10px; }
.need.date svg { width: 12px; height: 12px; margin-top: -7px; }
.need.date + .need { margin-top: 0; }
.need .pill { letter-spacing: -.2px; width: 136px; background: #4996b2; }
.need .meas { width: 118px; background: #00b180; }
```
